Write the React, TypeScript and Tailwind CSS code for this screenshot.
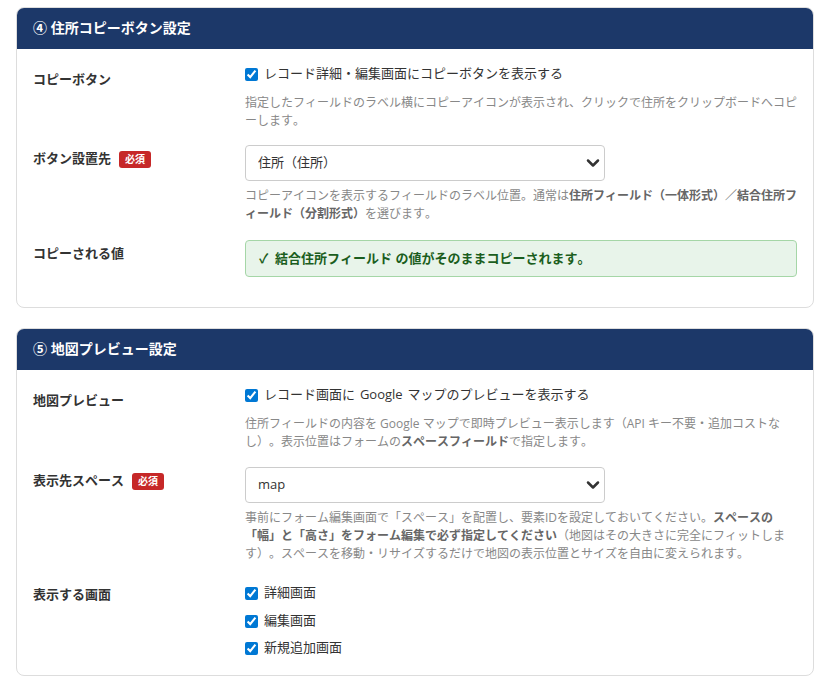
import { ChevronDown } from "lucide-react";
import type { ReactNode } from "react";

const font = { fontFamily: '"Open Sans", "Noto Sans CJK JP", "Noto Sans", sans-serif' };

function Row({ label, required, children }: { label: string; required?: boolean; children: ReactNode }) {
  return (
    <div className="flex">
      <div className="w-[212px] shrink-0 pt-1 flex items-center self-start h-6 gap-2 text-[13px] font-bold text-[#333333]">
        <span>{label}</span>
        {required && (
          <span className="bg-[#c62828] text-white text-[10px] leading-none font-bold rounded-[3px] px-[6px] py-[3.5px]">必須</span>
        )}
      </div>
      <div className="flex-1 min-w-0">{children}</div>
    </div>
  );
}

function Check({ text }: { text: string }) {
  return (
    <label className="flex items-center gap-[6px] h-4 text-[13px] text-[#333333]">
      <input type="checkbox" defaultChecked className="w-[13px] h-[13px] m-0 mt-px accent-[#0078d4]" />
      <span className="[word-spacing:1.5px]">{text}</span>
    </label>
  );
}

function Hint({ children }: { children: ReactNode }) {
  return <p className="text-xs leading-[18px] text-[#888888]">{children}</p>;
}

function Picker({ value }: { value: string }) {
  return (
    <div className="relative w-[360px] h-9">
      <select
        defaultValue={value}
        className="appearance-none w-full h-full rounded-[4px] border border-[#cccccc] bg-white pl-3 pr-8 text-[13px] text-[#333333]"
      >
        <option>{value}</option>
      </select>
      <ChevronDown className="absolute right-[2px] top-[8px] w-5 h-5 text-[#333333]" strokeWidth={3} />
    </div>
  );
}

function Card({ title, children }: { title: string; children: ReactNode }) {
  return (
    <section className="border border-[#dddddd] rounded-lg overflow-hidden bg-white">
      <h2 className="bg-[#1c3869] text-white text-sm font-bold h-[41px] pb-[2px] flex items-center px-4">{title}</h2>
      <div className="px-4">{children}</div>
    </section>
  );
}

export default function App() {
  return (
    <div className="bg-white h-[686px] overflow-hidden pl-4 pr-[11px] pt-[7px] [font-kerning:none] [text-spacing-trim:space-all]" style={font}>
      <Card title="④ 住所コピーボタン設定">
        <div className="pt-[17px] pb-[30px]">
          <Row label="コピーボタン">
            <Check text="レコード詳細・編集画面にコピーボタンを表示する" />
            <div className="mt-3">
              <Hint>指定したフィールドのラベル横にコピーアイコンが表示され、クリックで住所をクリップボードへコピーします。</Hint>
            </div>
          </Row>
          <div className="mt-[15px]">
            <Row label="ボタン設置先" required>
              <Picker value="住所（住所）" />
              <div className="mt-[6px] whitespace-nowrap">
                <Hint>
                  コピーアイコンを表示するフィールドのラベル位置。通常は<b className="font-bold text-[#666666]">住所フィールド（一体形式）／結合住所フ<br />ィールド（分割形式）</b>を選びます。
                </Hint>
              </div>
            </Row>
          </div>
          <div className="mt-[17px]">
            <Row label="コピーされる値">
              <div className="h-[37px] flex items-center px-3 rounded-[4px] border border-[#a5d6a7] bg-[#e8f4ea] text-[13px] font-bold text-[#1b5e20]">
                <span className="w-[17px] shrink-0 pl-[1px]">✓</span>
                <span>結合住所フィールド の値がそのままコピーされます。</span>
              </div>
            </Row>
          </div>
        </div>
      </Card>
      <div className="mt-5">
        <Card title="⑤ 地図プレビュー設定">
          <div className="pt-[17px] pb-[18.8px]">
            <Row label="地図プレビュー">
              <Check text="レコード画面に Google マップのプレビューを表示する" />
              <div className="mt-3">
                <Hint>
                  住所フィールドの内容を Google マップで即時プレビュー表示します（API キー不要・追加コストなし）。表示位置はフォームの<b className="font-bold text-[#666666]">スペースフィールド</b>で指定します。
                </Hint>
              </div>
            </Row>
            <div className="mt-4">
              <Row label="表示先スペース" required>
                <Picker value="map" />
                <div className="mt-[6px]">
                  <Hint>
                    事前にフォーム編集画面で「スペース」を配置し、要素IDを設定しておいてください。<b className="font-bold text-[#666666]">スペースの「幅」と「高さ」をフォーム編集で必ず指定してください</b>（地図はその大きさに完全にフィットします）。スペースを移動・リサイズするだけで地図の表示位置とサイズを自由に変えられます。
                  </Hint>
                </div>
              </Row>
            </div>
            <div className="mt-[18px]">
              <Row label="表示する画面">
                <div className="flex flex-col gap-[11.5px] pt-[4.2px]">
                  <Check text="詳細画面" />
                  <Check text="編集画面" />
                  <Check text="新規追加画面" />
                </div>
              </Row>
            </div>
          </div>
        </Card>
      </div>
    </div>
  );
}
